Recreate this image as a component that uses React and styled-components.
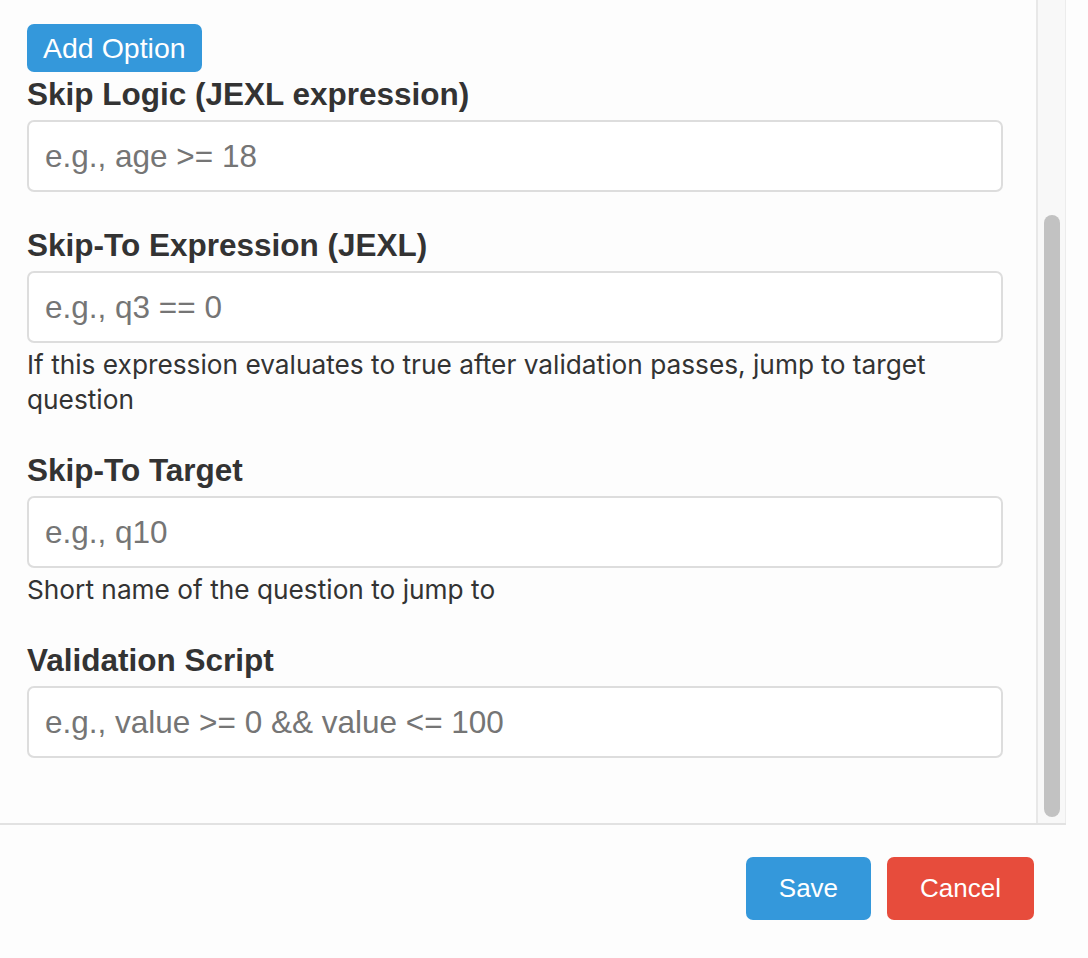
import React from 'react';
import styled, {createGlobalStyle} from 'styled-components';

const GlobalStyle = createGlobalStyle`
    body {
        margin: 0;
        background: #fdfdfd;
        font-family: "Liberation Sans", Arial, sans-serif;
    }
`;

const Modal = styled.div`
    width: 1066px;
    height: 958px;
    display: flex;
    flex-direction: column;
`;

const ScrollArea = styled.div`
    height: 825px;
    flex-shrink: 0;
    display: flex;
    box-sizing: border-box;
    border-bottom: 2px solid #e2e2e2;
`;

const Content = styled.div`
    flex: 1;
    min-width: 0;
    padding: 24px 33px 0 27px;
    overflow: hidden;
`;

const ScrollTrack = styled.div`
    width: 30px;
    box-sizing: border-box;
    background: #f8f8f8;
    border-left: 2px solid #e8e8e8;
    border-right: 1px solid #ececec;
    padding: 215px 0 0 6px;
`;

const ScrollThumb = styled.div`
    width: 16px;
    height: 602px;
    border-radius: 8px;
    background: #c2c2c2;
`;

const AddButton = styled.button`
    display: block;
    height: 48px;
    padding: 0 16px;
    border: none;
    border-radius: 7px;
    background: #3498db;
    color: #fff;
    font-family: "Liberation Sans", Arial, sans-serif;
    font-size: 28.5px;
    cursor: pointer;
`;

const FieldGroup = styled.div`
    margin-top: ${props => props.$tight ? '4px' : '35px'};
`;

const Label = styled.label`
    display: block;
    margin-bottom: 8px;
    font-size: 31.5px;
    line-height: 36px;
    font-weight: bold;
    color: #333;
`;

const TextInput = styled.input`
    display: block;
    width: 100%;
    height: 72px;
    box-sizing: border-box;
    padding: 0 16px;
    border: 2px solid #dddddd;
    border-radius: 7px;
    background: #fff;
    color: #333;
    font-family: "Liberation Sans", Arial, sans-serif;
    font-size: 31.5px;
    outline: none;

    &::placeholder {
        color: #757575;
    }
`;

const Help = styled.p`
    margin: 4px 0 0;
    font-family: Inter, "Noto Sans", sans-serif;
    font-size: 26.25px;
    line-height: 35px;
    color: #333;
`;

const Footer = styled.div`
    display: flex;
    justify-content: flex-end;
    gap: 16px;
    padding: 32px 32px 0;
`;

const ActionButton = styled.button`
    height: 63px;
    padding: 0 33px;
    border: none;
    border-radius: 7px;
    background: ${props => props.$danger ? '#e74c3c' : '#3498db'};
    color: #fff;
    font-family: "Liberation Sans", Arial, sans-serif;
    font-size: 26px;
    cursor: pointer;
`;

const fields = [
    {label: 'Skip Logic (JEXL expression)', placeholder: 'e.g., age >= 18'},
    {
        label: 'Skip-To Expression (JEXL)',
        placeholder: 'e.g., q3 == 0',
        help: 'If this expression evaluates to true after validation passes, jump to target question'
    },
    {label: 'Skip-To Target', placeholder: 'e.g., q10', help: 'Short name of the question to jump to'},
    {label: 'Validation Script', placeholder: 'e.g., value >= 0 && value <= 100'},
];

export default function App() {
    return (
        <>
            <GlobalStyle/>
            <Modal>
                <ScrollArea>
                    <Content>
                        <AddButton type="button">Add Option</AddButton>
                        {fields.map((field, index) => (
                            <FieldGroup key={field.label} $tight={index === 0}>
                                <Label>{field.label}</Label>
                                <TextInput placeholder={field.placeholder}/>
                                {field.help && <Help>{field.help}</Help>}
                            </FieldGroup>
                        ))}
                    </Content>
                    <ScrollTrack>
                        <ScrollThumb/>
                    </ScrollTrack>
                </ScrollArea>
                <Footer>
                    <ActionButton type="button">Save</ActionButton>
                    <ActionButton type="button" $danger>Cancel</ActionButton>
                </Footer>
            </Modal>
        </>
    );
}
